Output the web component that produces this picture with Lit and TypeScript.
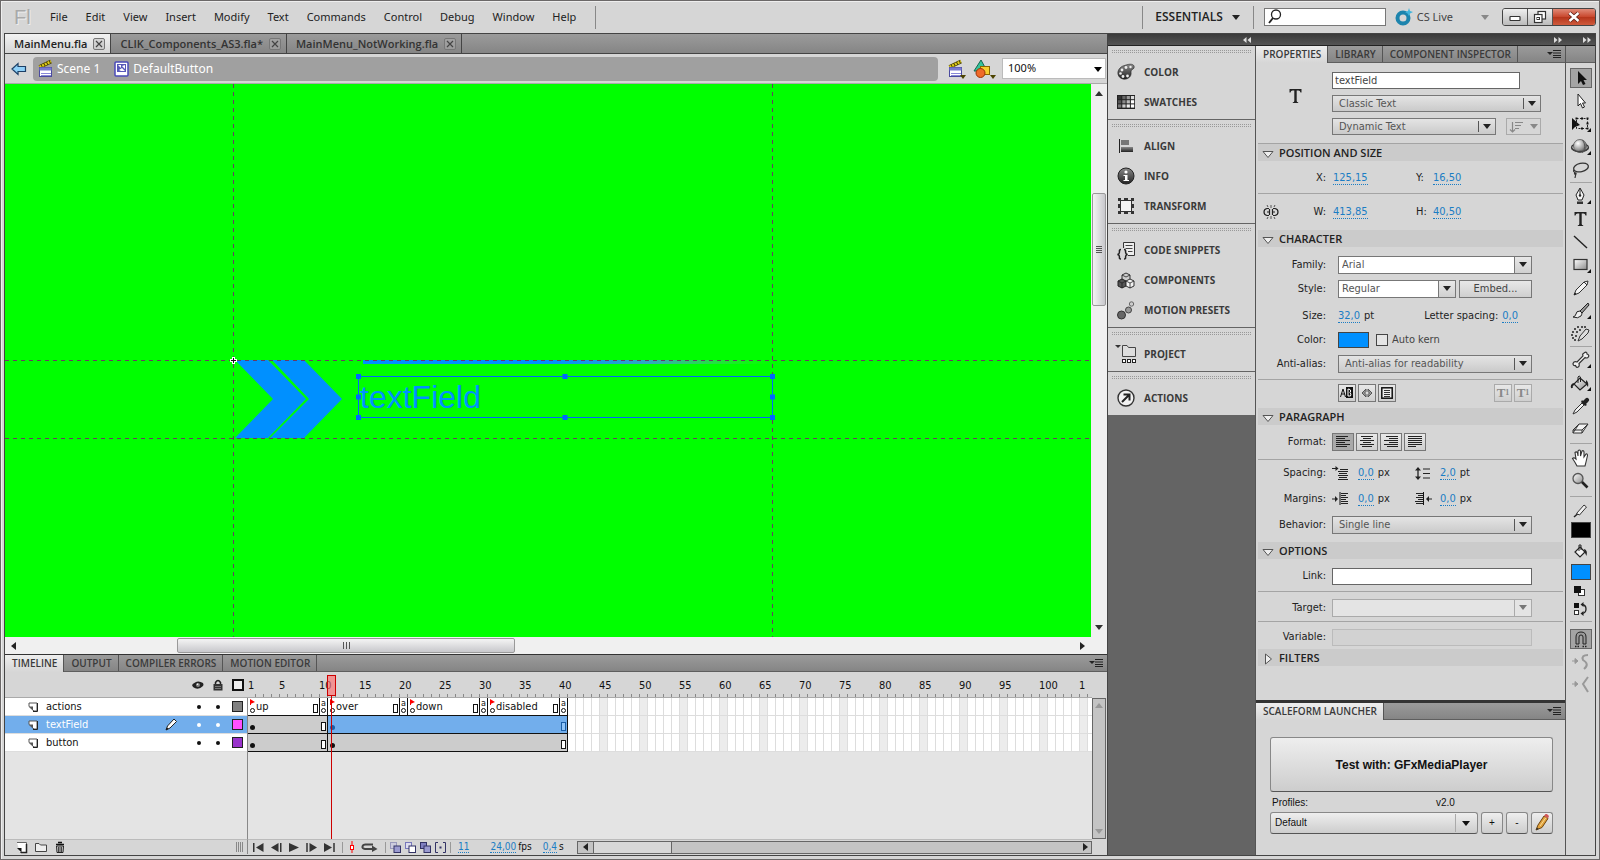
import { LitElement, html, css, svg, nothing, TemplateResult } from "lit";
import { customElement, property, state } from "lit/decorators.js";
import { classMap } from "lit/directives/class-map.js";
import { styleMap } from "lit/directives/style-map.js";

/* ---------- icon artwork ---------- */
const gloss = svg`<defs>
  <linearGradient id="g" x1="0" y1="0" x2="1" y2="1"><stop offset="0" stop-color="#fff"/><stop offset="1" stop-color="#8c8c8c"/></linearGradient>
  <radialGradient id="s" cx=".35" cy=".3" r=".8"><stop offset="0" stop-color="#fff"/><stop offset=".6" stop-color="#9a9a9a"/><stop offset="1" stop-color="#444"/></radialGradient>
  <linearGradient id="d" x1="0" y1="0" x2="0" y2="1"><stop offset="0" stop-color="#8a8a8a"/><stop offset="1" stop-color="#222"/></linearGradient>
</defs>`;
const bars = (rows: number[][]) => svg`${rows.map(([x, y, w]) => svg`<rect x=${x} y=${y} width=${w} height="1" fill="#222"/>`)}`;

type Icon = [number, number, unknown];
const ICONS: Record<string, Icon> = {
  back: [16, 16, svg`<path d="M1 8 7 2.5V5.500H14.500V10.500H7V13.500Z" fill="#8fd0f8" stroke="#1d3f66" stroke-width="1.200"/>`],
  clapper: [16, 20, svg`<path d="M1.500 8 13 2.500" stroke="#4c4300" stroke-width="4"/><path d="M1.500 8 13 2.500" stroke="#e0cc1a" stroke-width="2.600" stroke-dasharray="2 1"/><rect x="1.500" y="8.500" width="12" height="9" fill="#fff" stroke="#4a4a9e"/><rect x="1.500" y="8.500" width="12" height="3" fill="#7a7ad0"/><path d="M3 14.500H13M3 16.500H13" stroke="#8888d8"/>`],
  symbol: [16, 16, svg`<rect x="1" y="1" width="13" height="14" rx="1" fill="#fff" stroke="#4a4ab8" stroke-width="1.500"/><rect x="3" y="3" width="9" height="8" fill="#5858b8"/><path d="M4 4H7V7ZM11 4V8L8 5Z M5 9 8 7 11 10H7Z" fill="#fff"/>`],
  shapes: [22, 20, svg`<path d="M9 1 15 12H2Z" fill="#35c39a" stroke="#136650"/><rect x="8.500" y="7.500" width="9" height="8" fill="#f6cf2e" stroke="#8c6500"/><circle cx="8.500" cy="14" r="4.500" fill="#ef6a28" stroke="#9a3208"/>`],
  corner: [6, 4, svg`<path d="M0 0H6L3 4Z" fill="#4c4300"/>`],
  search: [14, 16, svg`<circle cx="8" cy="5.500" r="4.500" fill="none" stroke="#222" stroke-width="1.300"/><path d="M5 9 1 14" stroke="#222" stroke-width="1.800"/>`],
  cslive: [18, 18, svg`<circle cx="8" cy="10" r="5.500" fill="none" stroke="#1d84ad" stroke-width="4"/><path d="M14 0 15 3 18 4 15 5.500 14 8 12.500 5.500 10 4 13 3Z" fill="#3fb4dc"/>`],
  close: [12, 12, svg`<rect x=".5" y=".5" width="11" height="11" rx="1.500" fill="#b4b4b4" fill-opacity=".4" stroke="#777"/><path d="M3 3 9 9M9 3 3 9" stroke="#444" stroke-width="1.200"/>`],
  menu: [14, 8, svg`<path d="M0 2H6L3 5Z" fill="#222"/><path d="M6 .5H14M6 3H14M6 5.500H14M6 7.500H14" stroke="#222"/>`],
  left2: [8, 6, svg`<path d="M3.500 0V6L0 3ZM8 0V6L4.500 3Z" fill="#ddd"/>`],
  right2: [8, 6, svg`<path d="M0 0V6L3.500 3ZM4.500 0V6L8 3Z" fill="#ddd"/>`],
  min: [14, 12, svg`<rect x="2" y="5.500" width="10" height="4" rx=".5" fill="#fff" stroke="#333" stroke-width="1.200"/>`],
  restore: [14, 14, svg`<rect x="5" y="1.500" width="7.500" height="7.500" fill="#fff" stroke="#333" stroke-width="1.200"/><rect x="1.500" y="4.500" width="7.500" height="8" fill="#fff" stroke="#333" stroke-width="1.200"/><rect x="4" y="7.500" width="2.500" height="2" fill="none" stroke="#333"/>`],
  xbtn: [12, 10, svg`<path d="M1.500 1 10.500 9M10.500 1 1.500 9" stroke="#5b1d14" stroke-width="4"/><path d="M1.500 1 10.500 9M10.500 1 1.500 9" stroke="#fff" stroke-width="2.400"/>`],

  color: [18, 18, svg`${gloss}<path d="M9 2C15 0 18 2 17 5 16 7 14 6 14 9 15 14 10 17 6 16 1 15-1 9 3 5 5 3 6 3 9 2Z" fill="url(#d)" stroke="#222" stroke-width=".6"/><g fill="#eee"><circle cx="5" cy="7" r="1.400"/><circle cx="9" cy="4.500" r="1.400"/><circle cx="3.500" cy="10.500" r="1.300"/><circle cx="6" cy="13.500" r="1.400"/><circle cx="10.500" cy="13" r="1.400"/><circle cx="13.500" cy="4" r="1.200"/></g>`],
  swatches: [18, 14, svg`<rect width="18" height="14" fill="#222"/>${[0, 1, 2].map(r => [0, 1, 2, 3].map(c => svg`<rect x=${1 + c * 4.300} y=${1 + r * 4.200} width="3.300" height="3.200" fill=${["#333", "#666", "#999", "#ddd", "#555", "#888", "#bbb", "#fff", "#777", "#ccc", "#eee", "#fff"][r * 4 + c]}/>`))}`],
  align: [16, 16, svg`${gloss}<path d="M1.500 1V15" stroke="#222"/><rect x="3" y="2" width="8" height="5" fill="#777"/><rect x="3" y="9" width="12" height="5" fill="url(#d)"/>`],
  info: [18, 18, svg`${gloss}<circle cx="9" cy="9" r="8" fill="url(#d)" stroke="#222"/><circle cx="9" cy="5" r="1.600" fill="#fff"/><path d="M6.500 8H10.500V13H12V14H6.500V13H8V9H6.500Z" fill="#fff"/>`],
  transform: [18, 18, svg`<rect x="3.500" y="3.500" width="11" height="11" fill="#f4f4f4" stroke="#333"/><g fill="#333"><rect x="1" y="1" width="3" height="3"/><rect x="7" y="1" width="4" height="2"/><rect x="14" y="1" width="3" height="3"/><rect x="1" y="7" width="2" height="4"/><rect x="15" y="7" width="2" height="4"/><rect x="1" y="14" width="3" height="3"/><rect x="7" y="15" width="4" height="2"/><rect x="14" y="14" width="3" height="3"/></g>`],
  code: [20, 20, svg`<path d="M7.500 2.500H18.500V15.500H12" fill="#eee" stroke="#333"/><path d="M7.500 2.500V8" stroke="#333"/><path d="M9.500 5.500H16.500M9.500 8.500H16.500M12 11.500H16.500" stroke="#444"/><path d="M5 9.500Q3 9.500 3.500 12 3.500 14 1.500 14.500 3.500 15 3.500 17 3 19 5 19M8 9.500Q10 9.500 9.500 12 9.500 14 11.500 14.500 9.500 15 9.500 17 10 19 8 19" fill="none" stroke="#222" stroke-width="1.500"/>`],
  components: [18, 18, svg`<path d="M5 4 9 2 13 4V9L9 11 5 9Z" fill="#ccc" stroke="#333"/><path d="M1 10 5 8 9 10V15L5 17 1 15Z" fill="#555" stroke="#222"/><path d="M9 10 13 8 17 10V15L13 17 9 15Z" fill="#f4f4f4" stroke="#333"/><path d="M1 10 5 12 9 10 13 12 17 10M5 12V17M13 12V17M5 4 9 6 13 4" fill="none" stroke="#222" stroke-width=".8"/>`],
  motion: [18, 18, svg`<circle cx="4.500" cy="14" r="4" fill="#666" stroke="#333"/><circle cx="11.500" cy="9" r="3" fill="#999" stroke="#444"/><circle cx="14.500" cy="3" r="2.200" fill="#ccc" stroke="#666"/>`],
  project: [22, 20, svg`<path d="M0 1H6L3 4Z" fill="#333"/><path d="M7.500 12.500V1.500H12L13.500 3.500H20.500V12.500Z" fill="#ddd" stroke="#444"/><g fill="#fff" stroke="#222"><rect x="7.500" y="15.500" width="3" height="3"/><rect x="12.500" y="15.500" width="3" height="3"/><rect x="17.500" y="15.500" width="3" height="3"/></g>`],
  actions: [18, 18, svg`<circle cx="9" cy="9" r="8" fill="#f2f2f2" stroke="#333" stroke-width="1.400"/><path d="M5 13 12 6M6.500 5.500H12.500V11.500" fill="none" stroke="#222" stroke-width="2"/>`],

  select: [22, 20, svg`<path d="M8 3V16L11 13 13 17 15.500 16 13.500 12H17Z" fill="#111"/>`],
  subselect: [22, 20, svg`<path d="M8 3V15L10.500 12.500 12.500 17 14.500 16 12.500 12H15.500Z" fill="#fff" stroke="#222"/>`],
  freetransform: [22, 20, svg`<path d="M2 4V16L5 13 10 11Z" fill="#111"/><rect x="6.500" y="4.500" width="11" height="10" fill="none" stroke="#222" stroke-dasharray="2 1.500"/><g fill="#111"><rect x="5.500" y="3.500" width="2" height="2"/><rect x="11" y="3.500" width="2" height="2"/><rect x="16.500" y="3.500" width="2" height="2"/><rect x="16.500" y="8.500" width="2" height="2"/><rect x="16.500" y="13.500" width="2" height="2"/><rect x="11" y="13.500" width="2" height="2"/></g>`],
  rotate3d: [22, 20, svg`${gloss}<ellipse cx="10" cy="10.500" rx="8.500" ry="4" fill="none" stroke="#333" stroke-width="1.300"/><circle cx="10" cy="9" r="6.500" fill="url(#s)" stroke="#555" stroke-width=".8"/><path d="M1.500 10.500Q4 15 10 14.500 16 14.500 18.500 10.500" fill="none" stroke="#444" stroke-width="1.300"/><path d="M12.500 3Q17 9 12.500 16" fill="none" stroke="#555"/>`],
  lasso: [22, 20, svg`<ellipse cx="11" cy="7.500" rx="7.500" ry="4.200" fill="none" stroke="#333" stroke-width="1.300" transform="rotate(-12 11 7.500)"/><path d="M4 10C2 12 7 13 6 14 4 15 4 12 6 13L5 18" fill="none" stroke="#333" stroke-width="1.200"/>`],
  pen: [22, 20, svg`<path d="M10 2 14 9 12 14H8L6 9Z" fill="#f4f4f4" stroke="#222"/><path d="M10 3V9" stroke="#222"/><circle cx="10" cy="9.500" r="1.200" fill="#222"/><path d="M7 15.500H13V18H7Z" fill="#333"/>`],
  text: [22, 20, svg`<path d="M4.500 3H16.500V6.500H15.500Q15.200 4.500 13.500 4.500H11.700V15Q11.700 16.200 13.200 16.200V17H7.800V16.200Q9.300 16.200 9.300 15V4.500H7.500Q5.800 4.500 5.500 6.500H4.500Z" fill="#222"/>`],
  line: [22, 20, svg`<path d="M4 4 17 16" stroke="#222" stroke-width="1.400"/>`],
  rect: [22, 20, svg`${gloss}<rect x="4" y="4.500" width="13" height="10" fill="url(#g)" stroke="#333" stroke-width="1.200"/>`],
  pencil: [22, 20, svg`<path d="M4 17 6 12 14 4 18 3 17 7 9 15Z" fill="#f4f4f4" stroke="#333"/><path d="M14 4 17 7" stroke="#333"/><path d="M4 17 5 14.500 6.500 16Z" fill="#111"/>`],
  brush: [22, 20, svg`<path d="M18 2 10 10 12 12 19 4Z" fill="#999" stroke="#222"/><path d="M10 10Q6 10 6 13 5 16 3 16 8 18 11 15 12 13 12 12Z" fill="#eee" stroke="#222"/>`],
  deco: [22, 20, svg`<path d="M8 17 10 12 16 5 19 6 18 9 12 15Z" fill="#ddd" stroke="#333"/><g fill="#222">${[[3, 8], [5, 5], [8, 3], [12, 3], [15, 3], [2, 11], [3, 14], [5, 16], [7, 8], [10, 6], [6, 12]].map(([x, y]) => svg`<circle cx=${x} cy=${y} r="1"/>`)}</g>`],
  bone: [22, 20, svg`<path d="M14 3Q17 1 17 4 20 5 18 7.500 16 8.500 15 7.500L9 13.500Q10 17 7 17.500 6 17 5.500 15.500 3 16 3 13.500 4 11 7 12L13 6Q12 4 14 3Z" fill="#f2f2f2" stroke="#333" stroke-width="1.200"/>`],
  bucket: [22, 20, svg`${gloss}<path d="M10 5 17 11 10 17 4 11Z" fill="url(#g)" stroke="#222" stroke-width="1.200"/><path d="M8 10V4Q9 2 10.500 4V9" fill="none" stroke="#222"/><path d="M4 11Q1 12 2 15" fill="none" stroke="#222" stroke-width="2"/><path d="M16 7Q19 9 18 14L16 11Z" fill="#222"/>`],
  dropper: [22, 20, svg`<path d="M13 5 15 3Q17 1 18.500 2.500 20 4 18 6L16 8 17 9 15 10 11 6 12 4Z" fill="#222"/><path d="M12 7 5 14 3 18 7 16 14 9Z" fill="#f2f2f2" stroke="#333"/>`],
  eraser: [22, 20, svg`<path d="M9 5H18L12 14H3Z" fill="#f2f2f2" stroke="#333"/><path d="M3 14V11L9 5M12 14V11L18 5M3 11H12" fill="none" stroke="#333"/>`],
  hand: [22, 20, svg`<path d="M7 18Q5 14 2.500 10.500 4 9 6 11L5 4.500Q6.500 3 7.500 5L8 8V3Q9.500 1 10.500 3V8L12 3Q13.500 2 14 4V9L16 6Q17.500 5.500 17.500 7.500L16 14 15 18Z" fill="#fff" stroke="#333" stroke-width="1.100"/>`],
  zoom: [22, 20, svg`${gloss}<circle cx="8" cy="7.500" r="5" fill="url(#g)" stroke="#555" stroke-width="1.300"/><path d="M12 11 17.500 16.500" stroke="#222" stroke-width="2.600"/>`],
  stroke: [22, 16, svg`<path d="M4 15 12 8" stroke="#222" stroke-width="1.500"/><path d="M6.500 11.500 14 3 16.500 5 9.500 13Z" fill="#f2f2f2" stroke="#333"/>`],
  fillb: [22, 18, svg`<path d="M10 5 15 10 10 15 5 10Z" fill="#f2f2f2" stroke="#222" stroke-width="1.200"/><path d="M9 9V3H11V8" fill="none" stroke="#222"/><path d="M14 7Q18 8 16.500 14L14.500 10Z" fill="#222"/>`],
  bw: [22, 14, svg`<rect x="8.500" y="5.500" width="6" height="6" fill="#fff" stroke="#333"/><rect x="4" y="2" width="7" height="7" fill="#111"/>`],
  swap: [22, 14, svg`<rect x="4" y="1" width="5" height="5" fill="#111"/><rect x="4.500" y="8.500" width="4" height="4" fill="#fff" stroke="#333"/><path d="M12 2.500Q16 3 16 7 16 11 12 11.500" fill="none" stroke="#222" stroke-width="1.300"/><path d="M13.500 0V5L10.500 2.500ZM13.500 9V14L10.500 11.500Z" fill="#222"/>`],
  magnet: [22, 20, svg`<path d="M6 15V8Q6 3 11 3 16 3 16 8V15H13V8Q13 6 11 6 9 6 9 8V15Z" fill="#999" stroke="#222"/><path d="M5 17.500H9.500M12.500 17.500H17" stroke="#222" stroke-width="1.500" stroke-dasharray="1.500 1"/>`],
  smooth: [22, 20, svg`<path d="M2 9H7M5 6.500 8 9 5 11.500Z" fill="#999" stroke="#999"/><path d="M18 3Q11 3 13 8 20 12 14 17" fill="none" stroke="#999" stroke-width="2"/>`],
  straight: [22, 20, svg`<path d="M2 9H7M5 6.500 8 9 5 11.500Z" fill="#999" stroke="#999"/><path d="M18 2 13 9 18 17" fill="none" stroke="#999" stroke-width="2"/>`],

  dir: [14, 12, svg`<path d="M2.500 1V11M0 8.500 2.500 11 5 8.500M5 1.500H13M5 4.500H11M5 7.500H9" fill="none" stroke="#888" stroke-width="1.200"/>`],
  link: [16, 14, svg`<path d="M6 3.500H4Q1 4 1 7 1 10 4 10.500H6M10 3.500H12Q15 4 15 7 15 10 12 10.500H10M4 7H6.500M9.500 7H12M6.500 4V10M9.500 4V10" fill="none" stroke="#222" stroke-width="1.200"/><path d="M8 0V3M8 11V14M4 0 5 2M12 0 11 2M4 14 5 12M12 14 11 12" stroke="#555"/>`],
  selectable: [14, 12, svg`<rect x="6" width="7" height="11" fill="#111"/><path d="M.5 10 3 2 5.500 10M1.500 7H4.500" fill="none" stroke="#111"/><path d="M8 2V9H10.500Q11.500 7 10 5.500 11.500 4 10 2.500Z" fill="none" stroke="#fff"/>`],
  htmltag: [12, 10, svg`<path d="M5 1 1 5 5 9V6.500L3.500 5 5 3.500ZM7 1 11 5 7 9V6.500L8.500 5 7 3.500Z" fill="#999" stroke="#555"/>`],
  borderbox: [12, 12, svg`<rect x=".8" y=".8" width="10.400" height="10.400" fill="#eee" stroke="#111" stroke-width="1.500"/><path d="M3 3.500H9M3 5.500H9M3 7.500H9M3 9.500H9" stroke="#333"/>`],
  aleft: [14, 12, bars([[0, 0, 12], [0, 2, 9], [0, 4, 14], [0, 6, 9], [0, 8, 14], [0, 10, 11]])],
  acenter: [14, 12, bars([[1, 0, 12], [3, 2, 8], [0, 4, 14], [3, 6, 8], [0, 8, 14], [2, 10, 10]])],
  aright: [14, 12, bars([[2, 0, 12], [5, 2, 9], [0, 4, 14], [5, 6, 9], [0, 8, 14], [3, 10, 11]])],
  ajust: [14, 12, bars([[0, 0, 14], [0, 2, 14], [0, 4, 14], [0, 6, 14], [0, 8, 14], [0, 10, 8]])],
  indent: [17, 14, svg`<path d="M0 2.500H6" stroke="#222"/><path d="M3.500 0 6.500 2.500 3.500 5Z" fill="#222"/>${bars([[8, 3, 8], [6, 5, 10], [7, 7, 8], [6, 9, 10], [7, 11, 8], [6, 13, 10]])}`],
  leading: [16, 13, svg`<path d="M3 1V12" stroke="#222" stroke-width="1.300"/><path d="M0 3.500 3 0 6 3.500ZM0 9.500 3 13 6 9.500Z" fill="#222"/><path d="M8 2H15M8 6.500H15M8 11H15" stroke="#222" stroke-width="1.200"/>`],
  mleft: [17, 14, svg`<path d="M0 7H5" stroke="#222"/><path d="M3 4 6 7 3 10Z" fill="#222"/><path d="M8 0V13" stroke="#111"/>${bars([[9, 1, 7], [9, 3, 5], [9, 5, 7], [9, 7, 5], [9, 9, 7], [9, 11, 7]])}`],
  mright: [17, 14, svg`<path d="M12 7H17" stroke="#222"/><path d="M14 4 11 7 14 10Z" fill="#222"/><path d="M8.500 0V13" stroke="#111"/>${bars([[1, 1, 7], [3, 3, 5], [1, 5, 7], [3, 7, 5], [0, 9, 8], [1, 11, 7]])}`],

  eye: [12, 10, svg`<path d="M0 5Q5-1 11 3 12 5 11 6 6 11 1 7Z" fill="#222"/><circle cx="6" cy="5" r="2" fill="#888"/><circle cx="5.500" cy="4.300" r=".8" fill="#fff"/>`],
  lock: [10, 12, svg`<path d="M2.500 6V3.500Q5-.5 7.500 3.500V6" fill="none" stroke="#222" stroke-width="1.500"/><rect x=".5" y="5" width="9" height="6.500" fill="#333"/><path d="M2 7.500H8M2 9.500H8" stroke="#777"/>`],
  outline: [12, 12, svg`<rect x="1" y="1" width="10" height="10" fill="#eee" stroke="#111" stroke-width="2"/>`],
  layer: [10, 10, svg`<path d="M1 1H9V9H6L1 4.500Z" fill="#fff" stroke="#555"/><path d="M1 4.500H5V8.500Z" fill="#555"/><path d="M9.500 1V9.500H5" fill="none" stroke="#222"/>`],
  editing: [12, 13, svg`<path d="M1 12 2.500 8 9 1 11.500 3.500 5 10Z" fill="#fff" stroke="#222"/><path d="M1 12 2 9.500 3.500 11Z" fill="#111"/>`],
  newlayer: [11, 11, svg`<path d="M1 .5H10.500V10.500H4" fill="#fff" stroke="#666"/><path d="M1 6H5.500V10.500Z" fill="#111"/><path d="M10.500 2V10.500H5" fill="none" stroke="#222" stroke-width="1.500"/>`],
  folder: [12, 10, svg`<path d="M.5 9.500V1.500H4L5.500 3H11.500V9.500Z" fill="#eee" stroke="#444"/>`],
  trash: [10, 12, svg`<path d="M1 3.500H9M3 1.500H7" stroke="#111" stroke-width="1.400"/><path d="M1.500 5H8.500L8 11.500H2Z" fill="#ccc" stroke="#222"/><path d="M3.500 6V11M5 6V11M6.500 6V11" stroke="#222" stroke-width=".8"/>`],
  first: [11, 9, svg`<path d="M.75 0V9" stroke="#333" stroke-width="1.500"/><path d="M10.500 0V9L3 4.500Z" fill="#333"/>`],
  prev: [11, 9, svg`<path d="M7.500 0V9L0 4.500Z" fill="#333"/><path d="M9.750 0V9" stroke="#333" stroke-width="1.500"/>`],
  play: [10, 9, svg`<path d="M0 0V9L10 4.500Z" fill="#333"/>`],
  next: [11, 9, svg`<path d="M3.500 0V9L11 4.500Z" fill="#333"/><path d="M1 0V9" stroke="#333" stroke-width="1.500"/>`],
  last: [11, 9, svg`<path d="M0 0V9L8 4.500Z" fill="#333"/><path d="M10 0V9" stroke="#333" stroke-width="1.500"/>`],
  center: [4, 12, svg`<path d="M2 0V12" stroke="red"/><rect x=".5" y="4.500" width="3" height="4" fill="#fff" stroke="red"/>`],
  loop: [17, 9, svg`<path d="M12 6H4Q1 5.500 1.500 3.500 2 1.500 4.500 1.500H12" fill="none" stroke="#444" stroke-width="2"/><path d="M11 2.500 16.500 6 11 9Z" fill="#444"/>`],
  onion1: [11, 11, svg`<rect x=".5" y=".5" width="6" height="6" fill="#ccd" stroke="#99b"/><rect x="4" y="4" width="6.500" height="6.500" fill="#9a9ad0" stroke="#336"/>`],
  onion2: [11, 11, svg`<rect x=".5" y=".5" width="6" height="6" fill="#dde" stroke="#77b"/><rect x="4" y="4" width="6.500" height="6.500" fill="#fff" stroke="#336"/>`],
  onion3: [11, 11, svg`<rect x=".5" y=".5" width="6" height="6" fill="#8080c0" stroke="#336"/><rect x="4" y="4" width="6.500" height="6.500" fill="#9a9ad0" stroke="#336"/>`],
  onion4: [11, 11, svg`<path d="M3 .5H.5V10.500H3M8 .5H10.500V10.500H8" fill="none" stroke="#336"/><rect x="4.500" y="4.500" width="2" height="2" fill="#336"/>`],
  goldpencil: [14, 18, svg`<path d="M1 16 3 11 9 2 13 4.500 7 13.500Z" fill="#e2a23c" stroke="#6b4410"/><path d="M9 2 10.500 0H12L14 2 13 4.500Z" fill="#d05858"/><path d="M1 16 2 13.500 4 15Z" fill="#333"/><path d="M5 12 11 3.500" stroke="#f7dc97"/>`],
  aleftarrow: [5, 8, svg`<path d="M5 0V8L0 4Z" fill="#222"/>`],
  arightarrow: [5, 8, svg`<path d="M0 0V8L5 4Z" fill="#222"/>`],
  up: [8, 5, svg`<path d="M0 5H8L4 0Z" fill="currentColor"/>`],
  down: [8, 5, svg`<path d="M0 0H8L4 5Z" fill="currentColor"/>`],
  open: [12, 7, svg`<path d="M1 .5H11L6 6.500Z" fill="#eee" stroke="#555"/>`],
  shut: [7, 12, svg`<path d="M.5 1V11L6.500 6Z" fill="#eee" stroke="#555"/>`],
};

const icon = (name: string) => {
  const [w, h, art] = ICONS[name];
  return html`<svg class="i" width=${w} height=${h} viewBox="0 0 ${w} ${h}" aria-hidden="true">${art}</svg>`;
};

const shared = css`
  * { box-sizing: border-box; }
  .i { display: block; flex: none; overflow: visible; }
  button, input, select { font: inherit; color: inherit; margin: 0; border-radius: 0; }
  button { padding: 0; border: 0; background: none; display: flex; align-items: center; justify-content: center; }
  a { color: inherit; text-decoration: none; }
  .tabbar { display: flex; align-items: stretch; height: 17px; background: linear-gradient(#9b9b9b, #858585); border-bottom: 1px solid #5e5e5e; font-size: 10px; line-height: 14px; font-weight: 700; color: #3a3a3a; font-family: "Open Sans", "Noto Sans", sans-serif; }
  .tabbar button { padding: 0 6px 0 7px; border-right: 1px solid #555; white-space: nowrap; font-weight: 600; }
  .tabbar button.on { background: linear-gradient(#eee, #d6d6d6); margin-bottom: -1px; padding-bottom: 1px; }
  .tabbar .menu { margin-left: auto; padding: 0 4px; border: 0; }
`;

/* ---------- application bar ---------- */
@customElement("app-bar")
class AppBar extends LitElement {
  static styles = [shared, css`
    :host { display: flex; align-items: center; height: 32px; padding: 0 3px 0 13px; color: #222; }
    .logo { font: 20px/20px "Liberation Sans", sans-serif; color: #a9a9a9; text-shadow: 1px 1px 0 #eee; width: 27px; }
    nav { display: flex; }
    nav a { padding: 0 9px; line-height: 20px; }
    .sep { width: 1px; height: 23px; background: #888; margin: 0 10px; }
    .push { margin-left: auto; }
    .space { font-size: 12px; font-weight: 600; gap: 9px; font-family: "Open Sans", sans-serif; padding: 0 3px 0 2px; }
    .find { display: flex; align-items: center; background: #fff; border: 1px solid #777; height: 18px; width: 122px; padding: 0 3px; }
    .find input { border: 0; outline: 0; width: 100%; height: 14px; padding: 0; background: none; }
    .live { display: flex; align-items: center; gap: 4px; margin: 0 28px 0 9px; color: #444; }
    .dim { color: #888; }
    .win { display: flex; height: 18px; margin-left: 13px; border: 1px solid #444; border-radius: 3px; overflow: hidden; }
    .win button { width: 25px; background: linear-gradient(#eee, #bbb); border-right: 1px solid #555; }
    .win .x { width: 42px; border: 0; background: linear-gradient(#e08a78, #c8462c 50%, #b5351b 51%, #cf5a3c); }
  `];
  render() {
    return html`
      <span class="logo">Fl</span>
      <nav>${["File", "Edit", "View", "Insert", "Modify", "Text", "Commands", "Control", "Debug", "Window", "Help"].map(m => html`<a href="#">${m}</a>`)}</nav>
      <span class="sep"></span>
      <span class="sep push"></span>
      <button class="space">ESSENTIALS ${icon("down")}</button>
      <span class="sep"></span>
      <label class="find">${icon("search")}<input type="text" aria-label="Search" /></label>
      <a class="live" href="#">${icon("cslive")}CS Live</a>
      <button class="dim" aria-label="CS Live menu">${icon("down")}</button>
      <div class="win">
        <button aria-label="Minimize">${icon("min")}</button>
        <button aria-label="Restore">${icon("restore")}</button>
        <button class="x" aria-label="Close">${icon("xbtn")}</button>
      </div>`;
  }
}

/* ---------- document area ---------- */
@customElement("document-view")
class DocumentView extends LitElement {
  static styles = [shared, css`
    :host { display: grid; grid-template-rows: 20px 30px minmax(0, 1fr) 17px; min-height: 0; }
    .docs { display: flex; background: linear-gradient(#9b9b9b, #858585); border-bottom: 1px solid #444; font-weight: 600; font-size: 11px; font-family: "Open Sans", sans-serif; color: #333; }
    .docs > div { display: flex; align-items: center; gap: 6px; padding: 0 5px 0 9px; border-right: 1px solid #444; }
    .docs > div.on { background: linear-gradient(#f2f2f2, #d6d6d6); color: #222; }
    .crumbs { display: flex; align-items: center; gap: 6px; padding: 0 1px 0 6px; border-bottom: 1px solid #aaa; }
    .path { flex: 1; display: flex; align-items: center; height: 24px; padding-left: 5px; background: #a0a0a0; border-radius: 4px; color: #fff; font-size: 12px; margin-right: 4px; }
    .path a { display: flex; align-items: center; gap: 3px; margin-right: 14px; }
    .drop { display: flex; align-items: flex-end; }
    .drop .i + .i { margin-left: -4px; }
    .zoomsel { position: relative; width: 104px; height: 21px; background: #fff; border: 1px solid #bbb; }
    .zoomsel select { appearance: none; border: 0; background: none; width: 100%; height: 18px; padding: 0 5px; color: #111; }
    .zoomsel .i { position: absolute; right: 3px; top: 8px; pointer-events: none; }
    .mid { display: grid; grid-template-columns: minmax(0, 1fr) 16px; min-height: 0; }
    .stage { position: relative; background: #0f0; overflow: hidden; }
    .art { position: absolute; left: 0; top: 0; width: 100%; height: 100%; }
    .field { position: absolute; left: 355px; top: 295px; font: 32px/37px "Liberation Sans", Arial, sans-serif; color: #0090ff; }
    .v { display: flex; flex-direction: column; align-items: center; justify-content: space-between; background: #f0f0f0; padding: 7px 0; color: #333; position: relative; }
    .v .thumb { position: absolute; top: 109px; width: 14px; height: 113px; display: flex; flex-direction: column; align-items: center; justify-content: center; gap: 1px; background: linear-gradient(90deg, #f4f4f4, #c8c8cc); border: 1px solid #999; border-radius: 2px; }
    .v .thumb i { width: 6px; height: 1px; background: #555; }
    .h { display: flex; align-items: center; justify-content: space-between; padding: 0 22px 0 6px; background: #f0f0f0; position: relative; }
    .h .thumb { position: absolute; left: 172px; width: 338px; height: 15px; display: flex; align-items: center; justify-content: center; gap: 2px; background: linear-gradient(#f4f4f4, #c8c8cc); border: 1px solid #999; border-radius: 2px; }
    .h .thumb i { width: 1px; height: 7px; background: #555; }
  `];
  render() {
    const docs = ["MainMenu.fla", "CLIK_Components_AS3.fla*", "MainMenu_NotWorking.fla"];
    const handles = [[353.500, 292.500], [560, 292.500], [767.500, 292.500], [353.500, 313], [767.500, 313], [353.500, 333.500], [560, 333.500], [767.500, 333.500]];
    return html`
      <div class="docs">${docs.map((d, n) => html`<div class=${classMap({ on: n === 0 })}><span>${d}</span><button aria-label="Close ${d}">${icon("close")}</button></div>`)}</div>
      <div class="crumbs">
        <button aria-label="Back">${icon("back")}</button>
        <div class="path"><a href="#">${icon("clapper")}Scene 1</a><a href="#">${icon("symbol")}DefaultButton</a></div>
        <button class="drop" aria-label="Edit scene">${icon("clapper")}${icon("corner")}</button>
        <button class="drop" aria-label="Edit symbols">${icon("shapes")}${icon("corner")}</button>
        <div class="zoomsel"><select aria-label="Zoom"><option>100%</option></select>${icon("down")}</div>
      </div>
      <div class="mid">
        <div class="stage">
          <svg class="art">
            <defs><linearGradient id="fade"><stop offset="0" stop-color="#0090ff"/><stop offset=".45" stop-color="#0090ff"/><stop offset=".7" stop-color="#30a8c0"/><stop offset="1" stop-color="#60d060" stop-opacity="0"/></linearGradient></defs>
            <path d="M230 276H263L301 315 263 354H230L268 315Z M267 276H299L337 315 299 354H265L304 315Z" fill="#0090ff"/>
            <rect x="358" y="276" width="409" height="4" fill="url(#fade)"/>
            <g stroke="#6a3a62" stroke-dasharray="4 4">
              <line x1="0" x2="100%" y1="276.500" y2="276.500"/><line x1="0" x2="100%" y1="354.500" y2="354.500"/>
              <line x1="228.500" x2="228.500" y1="0" y2="100%"/><line x1="767.500" x2="767.500" y1="0" y2="100%"/>
            </g>
            <rect x="353.500" y="292.500" width="414" height="41" fill="none" stroke="#0066ff"/>
            ${handles.map(([x, y]) => svg`<rect x=${x - 2.500} y=${y - 2.500} width="5" height="5" fill="#0066ff"/>`)}
            <path d="M228.500 273V280M225 276.500H232" stroke="#fff" stroke-width="3"/><path d="M228.500 274V279M226 276.500H231" stroke="#111"/>
          </svg>
          <span class="field">textField</span>
        </div>
        <div class="v">${icon("up")}<div class="thumb"><i></i><i></i><i></i><i></i></div>${icon("down")}</div>
      </div>
      <div class="h">${icon("aleftarrow")}<div class="thumb"><i></i><i></i><i></i></div>${icon("arightarrow")}</div>`;
  }
}

/* ---------- timeline ---------- */
interface Span { frames: number; label?: string; kind: "label" | "action" | "tween" | "picked"; }
interface Layer { name: string; color: string; current?: boolean; spans: Span[]; }
const LAYERS: Layer[] = [
  { name: "actions", color: "#808080", spans: ["up", "over", "down", "disabled"].flatMap(label => [{ frames: 9, label, kind: "label" } as Span, { frames: 1, kind: "action" } as Span]) },
  { name: "textField", color: "#ff50ff", current: true, spans: [{ frames: 10, kind: "tween" }, { frames: 30, kind: "picked" }] },
  { name: "button", color: "#9933cc", spans: [{ frames: 10, kind: "tween" }, { frames: 30, kind: "tween" }] },
];

@customElement("timeline-panel")
class TimelinePanel extends LitElement {
  @state() private frame = 11;
  static styles = [shared, css`
    :host { display: grid; grid-template-rows: 17px minmax(0, 1fr); border-top: 1px solid #333; }
    .tl { display: grid; grid-template-columns: 243px minmax(0, 1fr) 14px; grid-template-rows: 26px minmax(0, 1fr) 15px; padding: 0 1px 1px 0; position: relative; color: #111; background: #d6d6d6; }
    .head { display: flex; align-items: center; justify-content: flex-end; gap: 9px; padding-right: 4px; border-bottom: 1px solid #aaa; }
    .list { background: #e4e4e4; border-right: 1px solid #888; }
    .layer { display: grid; grid-template-columns: 18px 1fr 24px 19px 19px 20px; align-items: center; height: 18px; padding-left: 23px; background: #fff; border-bottom: 1px solid #ddd; }
    .layer.on { background: #72aeec; color: #fff; }
    .layer .nm { line-height: 14px; }
    .layer b { width: 4px; height: 4px; border-radius: 2px; background: currentColor; justify-self: center; }
    .sw { width: 11px; height: 11px; border: 1px solid #222; justify-self: center; }
    .ruler { position: relative; overflow: hidden; border-bottom: 1px solid #aaa; background: repeating-linear-gradient(90deg, transparent 0 7px, #888 7px 8px) 0 100% / 100% 3px no-repeat; display: grid; grid-auto-flow: column; grid-auto-columns: 40px; grid-template-columns: 31px; line-height: 14px; padding-top: 7px; }
    .frames { background: #e4e4e4; min-width: 0; overflow: hidden; }
    .row { display: flex; height: 18px; border-bottom: 1px solid #ddd;
      background: repeating-linear-gradient(90deg, transparent 0 7px, #ddd 7px 8px), repeating-linear-gradient(90deg, #fff 0 32px, #ececec 32px 40px); }
    .span { position: relative; height: 18px; display: flex; align-items: flex-end; justify-content: space-between; border-right: 1px solid #111; border-bottom: 1px solid #111; background: #fff; padding: 0 1px 2px 2px; }
    .tween { background: #ccc; }
    .picked { background: #72aeec; color: #1b5fa8; }
    .span .dot { width: 5px; height: 5px; border-radius: 3px; background: currentColor; margin-bottom: 1px; }
    .span .end { width: 5px; height: 9px; border: 1px solid currentColor; background: #fff; }
    .picked .end { background: #8fc4f8; }
    .key { display: flex; align-items: flex-end; gap: 1px; line-height: 13px; }
    .mark { display: flex; flex-direction: column; align-items: center; width: 5px; gap: 3px; }
    .mark i { width: 5px; height: 6px; background: #f00; clip-path: polygon(0 0, 100% 50%, 20% 80%, 20% 100%, 0 100%); }
    .mark b, .act b { width: 5px; height: 5px; border: 1px solid #111; border-radius: 3px; }
    .act { display: flex; flex-direction: column; align-items: center; font-size: 9px; line-height: 8px; height: 15px; justify-content: flex-end; gap: 1px; }
    .span.action { padding: 0 0 2px; justify-content: center; }
    .head-mark { position: absolute; top: 3px; width: 9px; height: 21px; border: 1px solid #c00; background: #ff7070a8; }
    .head-line { position: absolute; top: 24px; bottom: 16px; width: 1px; background: #c00; }
    .vs { background: #c4c4c4; border: 1px solid #666; color: #999; display: flex; flex-direction: column; align-items: center; justify-content: space-between; padding: 4px 0; }
    .foot { display: flex; align-items: center; border-top: 1px solid #bbb; }
    .foot.l { padding: 0 4px 0 11px; gap: 8px; border-right: 1px solid #888; }
    .grip { margin-left: auto; width: 7px; height: 10px; background: repeating-linear-gradient(90deg, #888 0 1px, transparent 1px 2px); }
    .foot.r { gap: 7px; padding-left: 5px; }
    .foot u { width: 1px; height: 11px; background: #999; }
    .skins { display: flex; gap: 4px; }
    .foot .val { color: #1b7dc4; border-bottom: 1px dotted #1b7dc4; font-size: 10px; line-height: 11px; }
    .foot small { font-size: 10px; display: flex; align-items: center; gap: 2px; margin-left: 4px; white-space: nowrap; }
    .foot .val + small { margin-left: 14px; }
    .hs { flex: 1; display: flex; align-items: center; height: 13px; margin-left: 6px; border: 1px solid #666; background: #c4c4c4; padding-right: 3px; }
    .hs button { width: 15px; height: 11px; }
    .hs .th { width: 79px; height: 11px; background: #d8d8d8; border-left: 1px solid #666; border-right: 1px solid #666; margin-right: auto; }
  `];
  private span(s: Span): TemplateResult {
    const width = styleMap({ width: `${s.frames * 8}px` });
    if (s.kind === "action") return html`<div class="span action" style=${width}><span class="act">a<b></b></span></div>`;
    return html`<div class="span ${s.kind}" style=${width}>
      ${s.kind === "label" ? html`<span class="key"><span class="mark"><i></i><b></b></span>${s.label}</span>` : html`<span class="dot"></span>`}
      <span class="end"></span></div>`;
  }
  render() {
    const x = 242 + (this.frame - 1) * 8;
    return html`
      <div class="tabbar">
        ${["TIMELINE", "OUTPUT", "COMPILER ERRORS", "MOTION EDITOR"].map((t, n) => html`<button class=${classMap({ on: n === 0 })}>${t}</button>`)}
        <button class="menu" aria-label="Timeline menu">${icon("menu")}</button>
      </div>
      <div class="tl">
        <div class="head">${icon("eye")}${icon("lock")}${icon("outline")}</div>
        <div class="ruler">${[1, ...Array.from({ length: 20 }, (_, n) => (n + 1) * 5), "1"].map(n => html`<span>${n}</span>`)}</div>
        <div></div>
        <div class="list">${LAYERS.map(l => html`<div class=${classMap({ layer: true, on: !!l.current })}>
          ${icon("layer")}<span class="nm">${l.name}</span><span>${l.current ? icon("editing") : nothing}</span><b></b><b></b><span class="sw" style=${styleMap({ background: l.color })}></span></div>`)}</div>
        <div class="frames">${LAYERS.map(l => html`<div class="row">${l.spans.map(s => this.span(s))}</div>`)}</div>
        <div class="vs">${icon("up")}${icon("down")}</div>
        <div class="foot l">
          <button aria-label="New layer">${icon("newlayer")}</button><button aria-label="New folder">${icon("folder")}</button><button aria-label="Delete">${icon("trash")}</button><span class="grip"></span>
        </div>
        <div class="foot r">
          ${["first", "prev", "play", "next", "last"].map(n => html`<button aria-label=${n}>${icon(n)}</button>`)}<u></u>
          <button aria-label="Center frame">${icon("center")}</button><button aria-label="Loop">${icon("loop")}</button>
          <div class="skins"><u></u>${["onion1", "onion2", "onion3", "onion4"].map(n => html`<button aria-label="Onion skin">${icon(n)}</button>`)}<u></u></div>
          <span class="val">${this.frame}</span>
          <small><span class="val">24,00</span>fps</small><small><span class="val">0,4</span>s</small>
          <div class="hs"><button aria-label="Scroll left">${icon("aleftarrow")}</button><span class="th"></span>${icon("arightarrow")}</div>
        </div>
        <div></div>
        <div class="head-mark" style=${styleMap({ left: `${x}px` })}></div>
        <div class="head-line" style=${styleMap({ left: `${x + 4}px` })}></div>
      </div>`;
  }
}

/* ---------- collapsed panel dock ---------- */
@customElement("panel-dock")
class PanelDock extends LitElement {
  static styles = [shared, css`
    :host { display: block; background: #646464; font: 700 10px/14px "Open Sans", sans-serif; color: #3a3a3a; }
    .group { padding: 11px 0 2px; border-bottom: 1px solid #646464; background:
      repeating-linear-gradient(90deg, #999 0 1px, transparent 1px 2px) 4px 4px / 139px 1px no-repeat,
      repeating-linear-gradient(90deg, #999 0 1px, transparent 1px 2px) 4px 6px / 139px 1px no-repeat, #d6d6d6; }
    button { width: 100%; height: 30px; justify-content: flex-start; }
    .ic { width: 36px; display: flex; justify-content: center; }
  `];
  render() {
    const groups = [
      [["color", "COLOR"], ["swatches", "SWATCHES"]],
      [["align", "ALIGN"], ["info", "INFO"], ["transform", "TRANSFORM"]],
      [["code", "CODE SNIPPETS"], ["components", "COMPONENTS"], ["motion", "MOTION PRESETS"]],
      [["project", "PROJECT"]], [["actions", "ACTIONS"]],
    ];
    return html`${groups.map(g => html`<div class="group">${g.map(([i, t]) => html`<button><span class="ic">${icon(i)}</span>${t}</button>`)}</div>`)}`;
  }
}

/* ---------- properties ---------- */
@customElement("properties-panel")
class PropertiesPanel extends LitElement {
  static styles = [shared, css`
    :host { display: flex; flex-direction: column; background: #d6d6d6; color: #222; }
    .body { padding: 0 2px; }
    .top { display: grid; grid-template-columns: 74px minmax(0, 209px); padding: 9px 0 8px; }
    .top > div:first-child { display: flex; justify-content: center; padding: 14px 0 0 2px; }
    .stack { display: grid; gap: 6px; }
    .pair { display: flex; gap: 10px; }
    input.t { display: block; height: 17px; border: 1px solid #666; background: #fff; padding: 0 2px; width: 100%; color: #444; outline: 0; }
    input.t.name { width: 188px; }
    .sel { position: relative; display: block; height: 17px; flex: 1; }
    .sel select { appearance: none; display: block; width: 100%; height: 100%; border: 1px solid #777; padding: 0 20px 0 6px; background: linear-gradient(#e4e4e4, #cacaca); color: #555; outline: 0; }
    .sel::before { content: ""; position: absolute; right: 17px; top: 3px; bottom: 3px; width: 1px; background: #555; }
    .sel .i { position: absolute; right: 5px; top: 6px; color: #222; pointer-events: none; }
    .sel.edit select { background: linear-gradient(#e8e8e8, #d0d0d0) 100% 0 / 17px 100% no-repeat, #fff; padding-left: 3px; }
    .sel.edit::before { top: 0; bottom: 0; background: #777; }
    .sel.off select { border-color: #aaa; background: #e4e4e4; }
    .sel.off::before { background: #aaa; } .sel.off .i { color: #777; }
    .dir { width: 35px; height: 17px; border: 1px solid #aaa; gap: 6px; color: #888; }
    h3 { display: flex; align-items: center; gap: 5px; margin: 0; padding: 0 4px; height: 17px; background: #cbcbcb; font-size: 11px; line-height: 17px; font-weight: 600; font-family: "Open Sans", sans-serif; }
    h3 .m { width: 12px; display: flex; justify-content: center; padding-top: 3px; }
    hr { margin: 0; border: 0; border-top: 1px solid #a4a4a4; }
    .xy { display: grid; grid-template-columns: 68px 90px 1fr; align-items: center; height: 32px; padding-top: 2px; }
    .xy.wh { height: 36px; padding: 0; }
    .xy .lnk { display: flex; align-items: center; justify-content: space-between; padding-left: 5px; }
    .xy .one { justify-content: flex-end; display: flex; }
    .v { color: #1b7dc4; border-bottom: 1px dotted #1b7dc4; line-height: 13px; width: fit-content; }
    .xy span.c { padding-left: 7px; display: flex; }
    .xy .c2 { display: grid; grid-template-columns: 17px auto; justify-content: start; }
    .rows { display: grid; gap: 6px; padding: 9px 0 6px; }
    .row { display: flex; align-items: center; height: 18px; padding-right: 31px; }
    .row.tall { height: 21px; padding-top: 2px; }
    .row > label.l, .row > span.l { width: 68px; text-align: right; margin-right: 12px; flex: none; }
    .p .row > .l, .o .row > .l { margin-right: 6px; }
    .row .sel { height: 18px; }
    .btn { border: 1px solid #777; background: linear-gradient(#e8e8e8, #cfcfcf); height: 18px; color: #444; }
    .embed { width: 73px; margin-left: 3px; }
    .ml { margin-left: auto; }
    .sq { width: 18px; margin-right: 2px; }
    .fmt { width: 22px; margin-right: 2px; }
    .fmt.on { background: #a9a9a9; }
    .ss { width: 18px; font: bold 13px/14px "Liberation Serif", serif; color: #888; border-color: #aaa; }
    .ss sup, .ss sub { font-size: 8px; line-height: 8px; }
    .scripts { display: flex; gap: 2px; margin-left: auto; }
    .chip { width: 31px; height: 16px; border: 1px solid #444; background: #0090ff; margin-right: 7px; }
    .auto { display: flex; align-items: center; gap: 4px; color: #444; }
    .auto input { appearance: none; width: 12px; height: 12px; border: 1px solid #444; background: #e4e4e4; }
    .unit { display: flex; gap: 4px; align-items: baseline; }
    .unit.ml { padding-right: 14px; }
    .tools { display: flex; padding: 4px 31px 6px 80px; }
    .p.rows { gap: 8px; padding: 4px 0 8px; }
    .p.first { padding: 8px 0; }
    .g { width: 26px; display: flex; } .g2 { width: 25px; display: flex; }
    .w { width: 57px; }
    .o { padding: 8px 0 6px; } .o.mid { padding: 7px 0 4px; } .o.last { padding: 6px 0 3px; }
    input.t.off { border: 1px solid #bbb; background: #d2d2d2; }
  `];
  private sel(label: string, value: string, cls = "", id = "") {
    return html`<span class="sel ${cls}"><select id=${id || label} aria-label=${label}><option>${value}</option></select>${icon("down")}</span>`;
  }
  private h(t: string, open = true) {
    return html`<h3><span class="m">${icon(open ? "open" : "shut")}</span>${t}</h3>`;
  }
  render() {
    return html`
      <div class="tabbar"><button class="on">PROPERTIES</button><button>LIBRARY</button><button>COMPONENT INSPECTOR</button><button class="menu" aria-label="Panel menu">${icon("menu")}</button></div>
      <div class="body">
        <div class="top">
          <div>${icon("text")}</div>
          <div class="stack">
            <input class="t name" type="text" aria-label="Instance name" .value=${"textField"} />
            ${this.sel("Text engine", "Classic Text")}
            <div class="pair">${this.sel("Text type", "Dynamic Text")}<button class="dir" aria-label="Orientation">${icon("dir")}${icon("down")}</button></div>
          </div>
        </div>
        <hr />
        ${this.h("POSITION AND SIZE")}
        <div class="xy"><span class="one">X:</span><span class="c"><span class="v">125,15</span></span><span class="c2">Y:<span class="v">16,50</span></span></div>
        <hr />
        <div class="xy wh"><span class="lnk">${icon("link")}<span>W:</span></span><span class="c"><span class="v">413,85</span></span><span class="c2">H:<span class="v">40,50</span></span></div>
        ${this.h("CHARACTER")}
        <div class="rows">
          <div class="row"><label class="l" for="family">Family:</label>${this.sel("Family", "Arial", "edit", "family")}</div>
          <div class="row"><label class="l" for="style">Style:</label>${this.sel("Style", "Regular", "edit", "style")}<button class="btn embed">Embed...</button></div>
          <div class="row tall"><span class="l">Size:</span><span class="unit"><span class="v">32,0</span>pt</span><span class="unit ml">Letter spacing:<span class="v">0,0</span></span></div>
          <div class="row"><span class="l">Color:</span><button class="chip" aria-label="Text color"></button><label class="auto"><input type="checkbox" />Auto kern</label></div>
          <div class="row"><label class="l" for="aa">Anti-alias:</label>${this.sel("Anti-alias", "Anti-alias for readability", "", "aa")}</div>
        </div>
        <hr />
        <div class="tools">
          <button class="btn sq" aria-label="Selectable">${icon("selectable")}</button><button class="btn sq" aria-label="Render as HTML">${icon("htmltag")}</button><button class="btn sq" aria-label="Show border">${icon("borderbox")}</button>
          <div class="scripts"><button class="btn ss" disabled>T<sup>1</sup></button><button class="btn ss" disabled>T<sub>1</sub></button></div>
        </div>
        ${this.h("PARAGRAPH")}
        <div class="rows p first">
          <div class="row"><span class="l">Format:</span>${["aleft", "acenter", "aright", "ajust"].map((a, n) => html`<button class="btn fmt ${n ? "" : "on"}" aria-label=${a}>${icon(a)}</button>`)}</div>
        </div>
        <hr />
        <div class="rows p">
          <div class="row"><span class="l">Spacing:</span><span class="g">${icon("indent")}</span><span class="unit w"><span class="v">0,0</span>px</span><span class="g2">${icon("leading")}</span><span class="unit"><span class="v">2,0</span>pt</span></div>
          <div class="row"><span class="l">Margins:</span><span class="g">${icon("mleft")}</span><span class="unit w"><span class="v">0,0</span>px</span><span class="g2">${icon("mright")}</span><span class="unit"><span class="v">0,0</span>px</span></div>
          <div class="row"><label class="l" for="beh">Behavior:</label>${this.sel("Behavior", "Single line", "", "beh")}</div>
        </div>
        ${this.h("OPTIONS")}
        <div class="rows o"><div class="row"><label class="l" for="lnk">Link:</label><input id="lnk" class="t" type="text" /></div></div>
        <hr />
        <div class="rows o mid"><div class="row"><label class="l" for="tgt">Target:</label>${this.sel("Target", "", "edit off", "tgt")}</div></div>
        <hr />
        <div class="rows o last"><div class="row"><label class="l" for="var">Variable:</label><input id="var" class="t off" type="text" disabled /></div></div>
        ${this.h("FILTERS", false)}
      </div>`;
  }
}

/* ---------- launcher ---------- */
@customElement("launcher-panel")
class LauncherPanel extends LitElement {
  static styles = [shared, css`
    :host { display: block; background: #d6d6d6; border-top: 3px solid #333; color: #111; font: 10px/14px "Liberation Sans", Arial, sans-serif; }
    .b { padding: 17px 12px 21px 14px; }
    button.k { border: 1px solid #888; border-bottom-color: #555; border-radius: 3px; background: linear-gradient(#eee, #cdcdcd); }
    .test { width: 100%; height: 55px; font-size: 12px; font-weight: bold; }
    .lbl { display: grid; grid-template-columns: 164px 1fr; padding: 4px 2px 2px; }
    .line { display: flex; gap: 3px; }
    .s { flex: 1; position: relative; }
    .s select { appearance: none; display: block; width: 100%; height: 22px; border: 1px solid #888; border-bottom-color: #555; border-radius: 3px; background: linear-gradient(#eee, #cdcdcd); padding: 0 4px; }
    .s::before { content: ""; position: absolute; right: 22px; top: 2px; bottom: 2px; width: 1px; background: #aaa; }
    .s .i { position: absolute; right: 8px; top: 9px; }
    .line .k { width: 22px; height: 22px; }
  `];
  render() {
    return html`
      <div class="tabbar"><button class="on">SCALEFORM LAUNCHER</button><button class="menu" aria-label="Panel menu">${icon("menu")}</button></div>
      <div class="b">
        <button class="k test">Test with: GFxMediaPlayer</button>
        <div class="lbl"><label for="prof">Profiles:</label><span>v2.0</span></div>
        <div class="line"><span class="s"><select id="prof"><option>Default</option></select>${icon("down")}</span>
          <button class="k">+</button><button class="k">-</button><button class="k" aria-label="Edit profile">${icon("goldpencil")}</button></div>
      </div>`;
  }
}

/* ---------- tools ---------- */
@customElement("tools-panel")
class ToolsPanel extends LitElement {
  @property() tool = "select";
  static styles = [shared, css`
    :host { display: flex; flex-direction: column; align-items: center; background: #d6d6d6; }
    .cap { width: 100%; height: 17px; background: linear-gradient(#9b9b9b, #858585); border-bottom: 1px solid #5e5e5e; margin-bottom: 3px; }
    .grp { display: grid; justify-items: center; }
    .grp button { width: 22px; height: 23px; position: relative; }
    .on .i { background: #a4a4a4; box-shadow: inset 0 0 0 1px #666; }
    .more::after { content: ""; position: absolute; right: 1px; bottom: 3px; border: 2px solid transparent; border-right-color: #111; border-bottom-color: #111; }
    hr { width: 22px; margin: 1px 0; border: 0; border-top: 1px solid #a4a4a4; }
    .pad { padding: 0 0 2px; } .pad2 { padding: 1px 0 3px; }
    .ink { width: 20px; height: 16px; border: 1px solid #444; background: #000; }
    .fill { background: #0090ff; }
    .set { display: grid; justify-items: center; gap: 4px; padding: 4px 0; }
  `];
  private grp(names: string[], cls = "") {
    const more = ["freetransform", "rotate3d", "pen", "rect", "brush", "bone", "bucket"];
    return html`<div class="grp ${cls}">${names.map(n => html`<button aria-label=${n} class=${classMap({ on: n === this.tool || n === "magnet", more: more.includes(n) })}>${icon(n)}</button>`)}</div>`;
  }
  render() {
    return html`
      <div class="cap"></div>
      ${this.grp(["select", "subselect", "freetransform", "rotate3d", "lasso"])}<hr />
      ${this.grp(["pen", "text", "line", "rect", "pencil", "brush", "deco"])}<hr />
      ${this.grp(["bone", "bucket", "dropper", "eraser"], "pad")}<hr />
      ${this.grp(["hand", "zoom"], "pad2")}<hr />
      <div class="set">${icon("stroke")}<button class="ink" aria-label="Stroke color"></button>${icon("fillb")}<button class="ink fill" aria-label="Fill color"></button>${icon("bw")}${icon("swap")}</div><hr />
      <div class="set">${this.grp(["magnet", "smooth", "straight"])}</div>`;
  }
}

/* ---------- shell ---------- */
@customElement("app-root")
class AppRoot extends LitElement {
  static styles = [shared, css`
    :host { display: grid; grid-template-rows: auto minmax(0, 1fr); height: 100vh; background: #d6d6d6; border: 1px solid #6b6868; box-shadow: inset 1px 1px 0 #eee; font: 11px/14px "DejaVu Sans Condensed", "Noto Sans", sans-serif; box-sizing: border-box; }
    app-bar, document-view { font-family: "Noto Sans", sans-serif; }
    .work { display: grid; grid-template-columns: minmax(0, 1fr) 487px; margin: 0 3px 3px; border: 1px solid #444; min-height: 0; }
    .main { display: grid; grid-template-rows: minmax(0, 1fr) 201px; min-height: 0; border-right: 1px solid #444; }
    .side { display: grid; grid-template-rows: 12px minmax(0, 1fr); min-height: 0; }
    .rail { display: grid; grid-template-columns: 147px 1fr 29px; background: linear-gradient(#3a3a3a, #555); border-bottom: 1px solid #222; align-items: center; justify-items: end; }
    .rail span { padding-right: 4px; }
    .cols { display: grid; grid-template-columns: 147px minmax(0, 1fr) 29px; min-height: 0; }
    .mid { display: grid; grid-template-rows: minmax(0, 1fr) auto; border-left: 1px solid #555; border-right: 1px solid #555; min-height: 0; }
  `];
  render() {
    return html`
      <app-bar></app-bar>
      <div class="work">
        <div class="main"><document-view></document-view><timeline-panel></timeline-panel></div>
        <div class="side">
          <div class="rail"><span>${icon("left2")}</span><span>${icon("right2")}</span><span>${icon("right2")}</span></div>
          <div class="cols">
            <panel-dock></panel-dock>
            <div class="mid"><properties-panel></properties-panel><launcher-panel></launcher-panel></div>
            <tools-panel></tools-panel>
          </div>
        </div>
      </div>`;
  }
}
